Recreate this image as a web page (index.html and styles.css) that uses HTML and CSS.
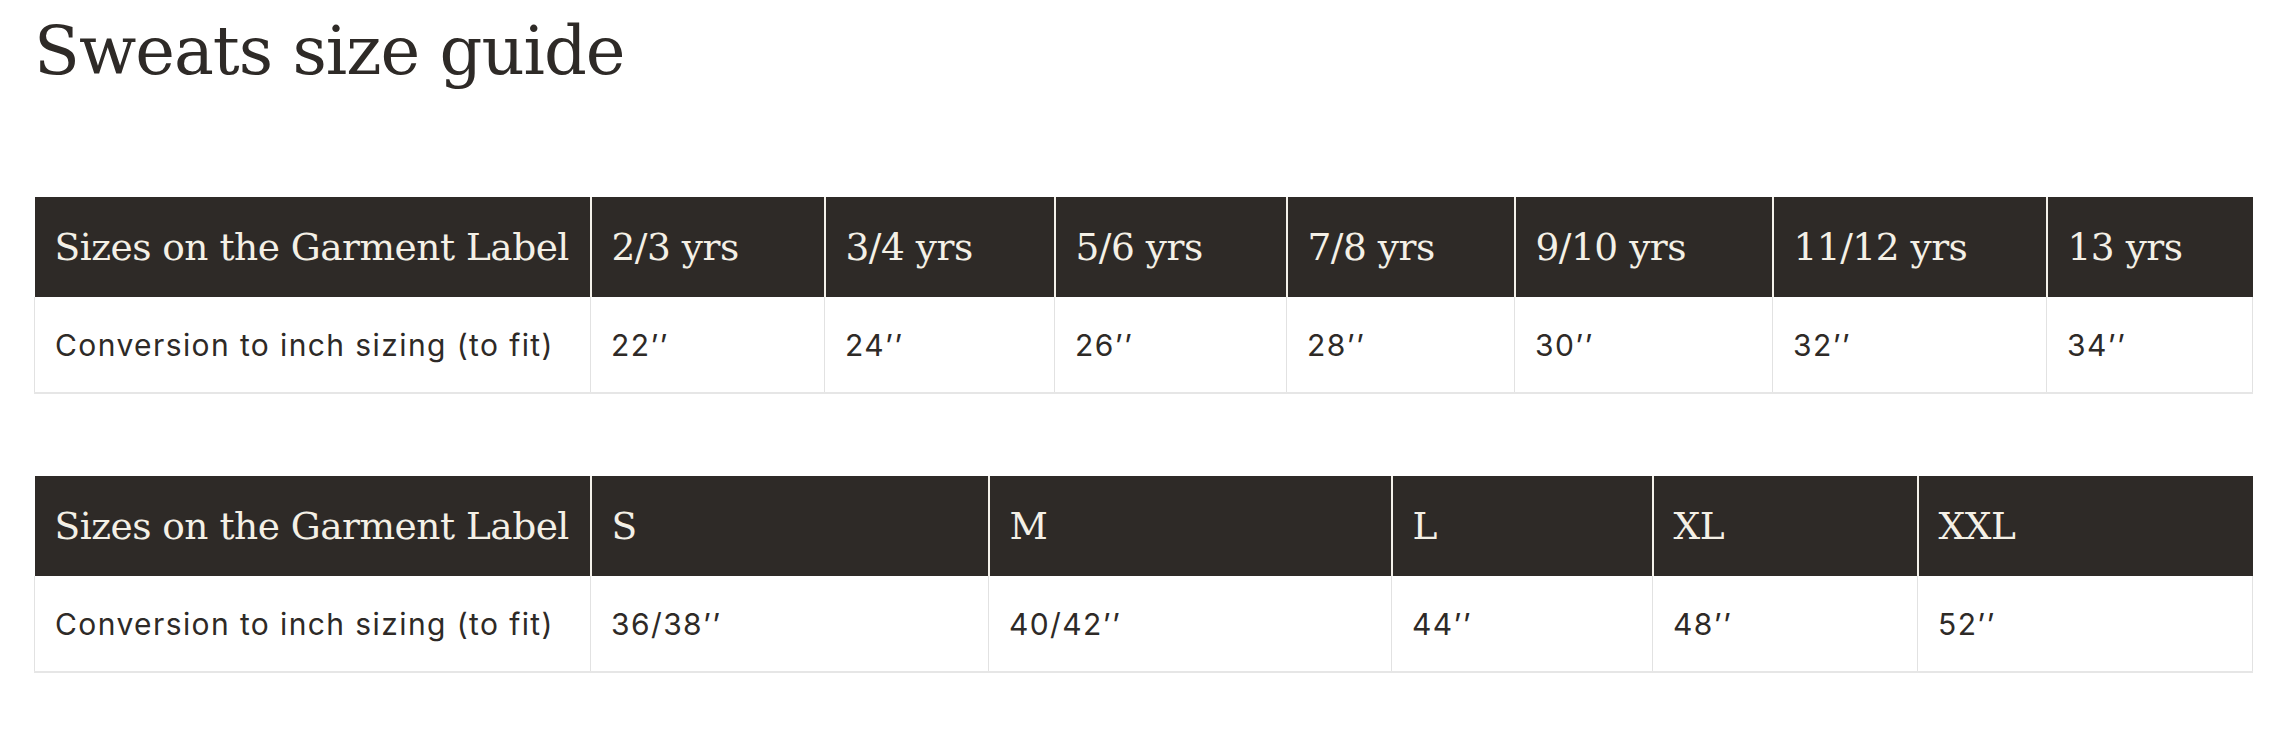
FILE: index.html
```html
<!DOCTYPE html>
<html lang="en">
<head>
<meta charset="utf-8">
<title>Sweats size guide</title>
<link rel="stylesheet" href="styles.css">
</head>
<body>
<main class="page">
  <h1 class="title">Sweats size guide</h1>

  <table class="size-table kids">
    <colgroup>
      <col><col><col><col><col><col><col><col>
    </colgroup>
    <thead>
      <tr>
        <th>Sizes on the Garment Label</th>
        <th>2/3 yrs</th>
        <th>3/4 yrs</th>
        <th>5/6 yrs</th>
        <th>7/8 yrs</th>
        <th>9/10 yrs</th>
        <th>11/12 yrs</th>
        <th>13 yrs</th>
      </tr>
    </thead>
    <tbody>
      <tr>
        <td>Conversion to inch sizing (to fit)</td>
        <td>22’’</td>
        <td>24’’</td>
        <td>26’’</td>
        <td>28’’</td>
        <td>30’’</td>
        <td>32’’</td>
        <td>34’’</td>
      </tr>
    </tbody>
  </table>

  <table class="size-table adults">
    <colgroup>
      <col><col><col><col><col><col>
    </colgroup>
    <thead>
      <tr>
        <th>Sizes on the Garment Label</th>
        <th>S</th>
        <th>M</th>
        <th>L</th>
        <th>XL</th>
        <th>XXL</th>
      </tr>
    </thead>
    <tbody>
      <tr>
        <td>Conversion to inch sizing (to fit)</td>
        <td>36/38’’</td>
        <td>40/42’’</td>
        <td>44’’</td>
        <td>48’’</td>
        <td>52’’</td>
      </tr>
    </tbody>
  </table>
</main>
</body>
</html>
```

FILE: styles.css
```css
html, body {
  margin: 0;
  padding: 0;
  background: #ffffff;
}

.page {
  padding: 0 44px 0 34px;
  color: #2e2a27;
}

.title {
  margin: 0;
  padding-top: 6px;
  height: 197px;
  box-sizing: border-box;
  font-family: "DejaVu Serif", "Liberation Serif", serif;
  font-weight: normal;
  font-size: 67px;
  line-height: 90px;
  letter-spacing: -1px;
  color: #2e2a27;
}

.size-table {
  width: 2218px;
  table-layout: fixed;
  border-collapse: collapse;
  border-spacing: 0;
}

.size-table + .size-table {
  margin-top: 82px;
}

.size-table th {
  height: 100px;
  padding: 0 0 0 20px;
  box-sizing: border-box;
  background: #2e2a27;
  color: #f4f0e6;
  text-align: left;
  font-family: "DejaVu Serif", "Liberation Serif", serif;
  font-weight: normal;
  font-size: 37.5px;
  letter-spacing: -0.5px;
  border-left: 2px solid #f4f1ea;
  white-space: nowrap;
}

.size-table th:first-child {
  border-left: none;
}

.size-table td {
  height: 96px;
  padding: 0 0 0 20px;
  box-sizing: border-box;
  text-align: left;
  font-family: "Inter", "DejaVu Sans", sans-serif;
  font-size: 30px;
  letter-spacing: 1.4px;
  color: #2e2a27;
  border: 1px solid #e2e2e2;
  border-top: none;
  border-bottom: 2px solid #e6e6e6;
  white-space: nowrap;
}

.kids col:nth-child(1) { width: 556px; }
.kids col:nth-child(2) { width: 234px; }
.kids col:nth-child(3) { width: 230px; }
.kids col:nth-child(4) { width: 232px; }
.kids col:nth-child(5) { width: 228px; }
.kids col:nth-child(6) { width: 258px; }
.kids col:nth-child(7) { width: 274px; }
.kids col:nth-child(8) { width: 206px; }

.adults col:nth-child(1) { width: 556px; }
.adults col:nth-child(2) { width: 398px; }
.adults col:nth-child(3) { width: 403px; }
.adults col:nth-child(4) { width: 261px; }
.adults col:nth-child(5) { width: 265px; }
.adults col:nth-child(6) { width: 335px; }
```
